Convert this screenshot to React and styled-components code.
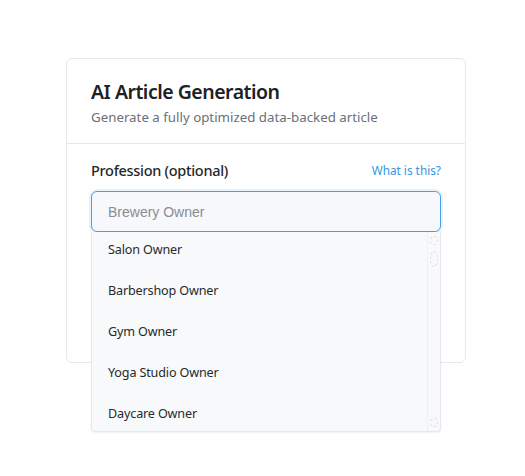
import React from "react";
import styled, { createGlobalStyle } from "styled-components";

const GlobalStyle = createGlobalStyle`
  body {
    margin: 0;
    background: #ffffff;
    font-family: "Noto Sans", "Open Sans", sans-serif;
  }
`;

const Page = styled.div`
  width: 525px;
  height: 476px;
  padding: 58px 0 0 66px;
  box-sizing: border-box;
`;

const Card = styled.div`
  width: 400px;
  box-sizing: border-box;
  border: 1px solid #e6e8eb;
  border-radius: 6px;
  background: #fff;
`;

const Header = styled.div`
  padding: 19px 24px 16px;
  border-bottom: 1px solid #e6e8eb;
`;

const Title = styled.h2`
  margin: 0;
  font-size: 19.5px;
  line-height: 28px;
  font-weight: 600;
  letter-spacing: -0.5px;
  color: #1d2125;
`;

const Subtitle = styled.p`
  margin: 1px 0 0;
  font-size: 13.3px;
  line-height: 20px;
  color: #6b7078;
`;

const Body = styled.div`
  padding: 15px 24px 19px;
`;

const LabelRow = styled.div`
  display: flex;
  justify-content: space-between;
  align-items: center;
  height: 22px;
`;

const Label = styled.label`
  font-size: 14.5px;
  font-weight: 500;
  letter-spacing: -0.3px;
  color: #25282c;
`;

const HelpLink = styled.a`
  font-size: 11.8px;
  color: #3497e0;
  text-decoration: none;
`;

const Field = styled.div`
  position: relative;
  margin-top: 10px;
`;

const Input = styled.input`
  display: block;
  width: 100%;
  height: 41px;
  box-sizing: border-box;
  padding: 0 16px;
  border: 1px solid #4a9fe0;
  border-radius: 6px;
  background: #f6f8fb;
  box-shadow: 0 0 0 2px rgba(74, 159, 224, 0.12);
  font-family: "Liberation Sans", Arial, sans-serif;
  font-size: 14px;
  color: #333;
  outline: none;

  &::placeholder {
    color: #8a8d91;
  }
`;

const Menu = styled.div`
  position: absolute;
  top: 41px;
  left: 0;
  width: 350px;
  height: 200px;
  box-sizing: border-box;
  overflow: hidden;
  background: #f8f9fa;
  border: 1px solid #e6e8eb;
  border-top: none;
  border-radius: 0 0 4px 4px;
  box-shadow: 0 1px 2px rgba(0, 0, 0, 0.06);
  display: flex;
  z-index: 2;
`;

const Options = styled.ul`
  list-style: none;
  margin: -3px 0 0;
  padding: 0;
  flex: 1;
`;

const Option = styled.li`
  height: 41px;
  display: flex;
  align-items: center;
  padding-left: 16px;
  font-size: 12.6px;
  letter-spacing: -0.15px;
  color: #26292d;
`;

const Track = styled.div`
  width: 12px;
  display: flex;
  flex-direction: column;
  justify-content: space-between;
  align-items: center;
  padding: 4px 0 4px;
  border-left: 1px solid #f0f1f3;
`;

const ArrowGroup = styled.div`
  display: flex;
  flex-direction: column;
  align-items: center;
  gap: 6px;
`;

const Arrow = styled.span`
  width: 8px;
  height: ${(p) => p.$h || 10}px;
  border: 1px dashed #dcdfe3;
  border-radius: 50%;
  box-sizing: border-box;
`;

const Actions = styled.div`
  display: flex;
  justify-content: flex-end;
  margin-top: 80px;
`;

const Button = styled.button`
  width: 120px;
  height: 31px;
  border: 1px solid #dfe2e6;
  border-radius: 4px;
  background: #fff;
`;

const options = [
  "Salon Owner",
  "Barbershop Owner",
  "Gym Owner",
  "Yoga Studio Owner",
  "Daycare Owner",
];

export default function App() {
  return (
    <Page>
      <GlobalStyle />
      <Card>
        <Header>
          <Title>AI Article Generation</Title>
          <Subtitle>Generate a fully optimized data-backed article</Subtitle>
        </Header>
        <Body>
          <LabelRow>
            <Label>Profession (optional)</Label>
            <HelpLink href="#">What is this?</HelpLink>
          </LabelRow>
          <Field>
            <Input placeholder="Brewery Owner" autoFocus />
            <Menu>
              <Options>
                {options.map((o) => (
                  <Option key={o}>{o}</Option>
                ))}
              </Options>
              <Track>
                <ArrowGroup>
                  <Arrow $h={9} />
                  <Arrow $h={16} />
                </ArrowGroup>
                <Arrow $h={9} />
              </Track>
            </Menu>
          </Field>
          <Actions>
            <Button />
          </Actions>
        </Body>
      </Card>
    </Page>
  );
}
